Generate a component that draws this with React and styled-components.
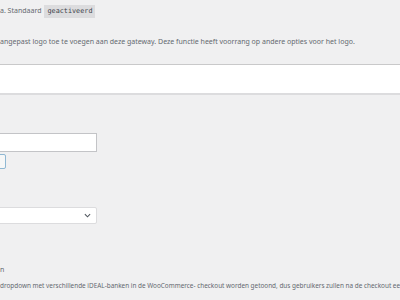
import React from 'react';
import styled, { createGlobalStyle } from 'styled-components';

const GlobalStyle = createGlobalStyle`
  html, body {
    margin: 0;
    padding: 0;
    background: #f0f0f1;
    overflow: hidden;
  }
  body {
    font-family: "Noto Sans", "Open Sans", sans-serif;
    color: #50575e;
  }
`;

const Page = styled.div`
  width: 400px;
  height: 300px;
  overflow: hidden;
  display: flex;
  flex-direction: column;
`;

const Description = styled.p`
  margin: ${p => p.$top || 0}px 0 0 0;
  font-size: ${p => p.$size || 7}px;
  line-height: 13px;
  white-space: nowrap;
  color: #646970;
`;

const Code = styled.code`
  display: inline-block;
  margin-left: 3px;
  padding: 0 3px;
  background: #dcdcde;
  font-family: "DejaVu Sans Mono", "Liberation Mono", monospace;
  font-size: 6.8px;
  line-height: 13px;
  color: #3c434a;
`;

const Band = styled.div`
  margin-top: 16px;
  height: 28px;
  background: #fff;
  border-top: 1px solid #c9c9ca;
  border-bottom: 2px solid #dcdcde;
`;

const TextInput = styled.div`
  margin: 38px 0 0 -2px;
  width: 97px;
  height: 17px;
  background: #fff;
  border: 1px solid #c3c4c7;
`;

const SmallButton = styled.div`
  margin: 2px 0 0 -10px;
  width: 14px;
  height: 13px;
  background: #f6f7f7;
  border: 1px solid #8fb8d3;
  border-radius: 2px;
`;

const Select = styled.div`
  margin: 38px 0 0 -2px;
  width: 99px;
  height: 17px;
  box-sizing: border-box;
  background: #fff;
  border: 1px solid #dcdcde;
  border-radius: 2px;
  display: flex;
  align-items: center;
  justify-content: flex-end;
  padding-right: 5px;
  svg {
    width: 7px;
    height: 5px;
  }
`;

export default function App() {
  return (
    <>
      <GlobalStyle />
      <Page>
        <Description $top={4}>
          a. Standaard<Code>geactiveerd</Code>
        </Description>
        <Description $top={17}>
          angepast logo toe te voegen aan deze gateway. Deze functie heeft voorrang op andere opties voor het logo.
        </Description>
        <Band />
        <TextInput />
        <SmallButton />
        <Select>
          <svg viewBox="0 0 8 5" fill="none">
            <path d="M1 1l3 3 3-3" stroke="#50575e" strokeWidth="1.2" />
          </svg>
        </Select>
        <Description $top={39}>n</Description>
        <Description $top={3} $size={6.4}>
          dropdown met verschillende iDEAL-banken in de WooCommerce- checkout worden getoond, dus gebruikers zullen na de checkout een bank kunnen kiezen.
        </Description>
      </Page>
    </>
  );
}
